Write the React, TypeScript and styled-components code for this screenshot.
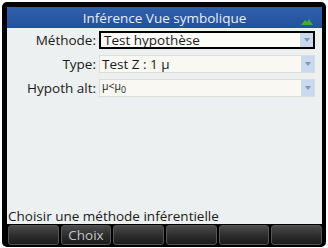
import React from "react";
import styled, { createGlobalStyle } from "styled-components";

const GlobalStyle = createGlobalStyle`
    body {
        margin: 0;
        background: #ffffff;
        font-family: "Open Sans", "DejaVu Sans", sans-serif;
    }
`;

const Frame = styled.div`
    width: 324px;
    height: 245px;
    margin: 2px;
    padding: 5px 4px 0 5px;
    box-sizing: border-box;
    background: #000;
    border-radius: 5px;
`;

const Screen = styled.div`
    height: 100%;
    display: flex;
    flex-direction: column;
    background: #edf0f0;
`;

const TitleBar = styled.div`
    position: relative;
    height: 21px;
    display: flex;
    align-items: center;
    justify-content: center;
    background: linear-gradient(#2f5fad, #24519d);
    color: #e6eefa;
    font-size: 13.5px;
`;

const Indicator = styled.svg`
    position: absolute;
    right: 9px;
    bottom: 3px;
`;

const Form = styled.div`
    display: grid;
    grid-template-columns: 89px 1fr;
    column-gap: 3px;
    row-gap: 6px;
    padding: 3px 7px 0 0;
`;

const Label = styled.div`
    height: 18px;
    display: flex;
    align-items: center;
    justify-content: flex-end;
    font-size: 13.5px;
    color: #1a1a1a;
`;

const Field = styled.div<{ $active?: boolean }>`
    height: 18px;
    box-sizing: border-box;
    display: flex;
    align-items: center;
    padding-left: ${(p) => (p.$active ? "3px" : "2px")};
    border: ${(p) => (p.$active ? "2px solid #000" : "1px solid #dedcd6")};
    background: ${(p) => (p.$active ? "#fbfbf8" : "#f9f8f2")};
    font-size: 13.5px;
    color: #1a1a1a;
`;

const Value = styled.span<{ $small?: boolean }>`
    flex: 1;
    font-size: ${(p) => (p.$small ? "10.5px" : "13.5px")};
`;

const Arrow = styled.div`
    width: 13px;
    align-self: stretch;
    display: flex;
    align-items: center;
    justify-content: center;
    background: #c9d9ef;
    &::after {
        content: "";
        border-left: 3px solid transparent;
        border-right: 3px solid transparent;
        border-top: 4px solid #8797a8;
    }
`;

const Spacer = styled.div`
    flex: 1;
`;

const Status = styled.div`
    height: 16px;
    padding-left: 1px;
    font-size: 13.5px;
    line-height: 16px;
    color: #1a1a1a;
    white-space: nowrap;
`;

const MenuBar = styled.div`
    display: flex;
    gap: 2px;
    height: 23px;
    padding: 1px 0 2px 1px;
    box-sizing: border-box;
    background: #000;
`;

const MenuKey = styled.div`
    flex: 1;
    display: flex;
    align-items: center;
    justify-content: center;
    border: 1px solid #555;
    border-radius: 3px;
    background: linear-gradient(#4a4a4a, #2c2c2c 55%, #1c1c1c);
    color: #c4c4c4;
    font-size: 13.5px;
`;

const menu = ["", "Choix", "", "", "", ""];

export default function App() {
    return (
        <>
            <GlobalStyle />
            <Frame>
                <Screen>
                    <TitleBar>
                        Inférence Vue symbolique
                        <Indicator width="12" height="6" viewBox="0 0 12 6">
                            <path d="M0 6 L4 1 L6 3 L8 0 L12 6 Z" fill="#3fae3a" />
                        </Indicator>
                    </TitleBar>
                    <Form>
                        <Label>Méthode:</Label>
                        <Field $active>
                            <Value>Test hypothèse</Value>
                            <Arrow />
                        </Field>
                        <Label>Type:</Label>
                        <Field>
                            <Value>Test Z : 1 μ</Value>
                            <Arrow />
                        </Field>
                        <Label>Hypoth alt:</Label>
                        <Field>
                            <Value $small>
                                μ&lt;μ<sub>0</sub>
                            </Value>
                            <Arrow />
                        </Field>
                    </Form>
                    <Spacer />
                    <Status>Choisir une méthode inférentielle</Status>
                    <MenuBar>
                        {menu.map((m, i) => (
                            <MenuKey key={i}>{m}</MenuKey>
                        ))}
                    </MenuBar>
                </Screen>
            </Frame>
        </>
    );
}
